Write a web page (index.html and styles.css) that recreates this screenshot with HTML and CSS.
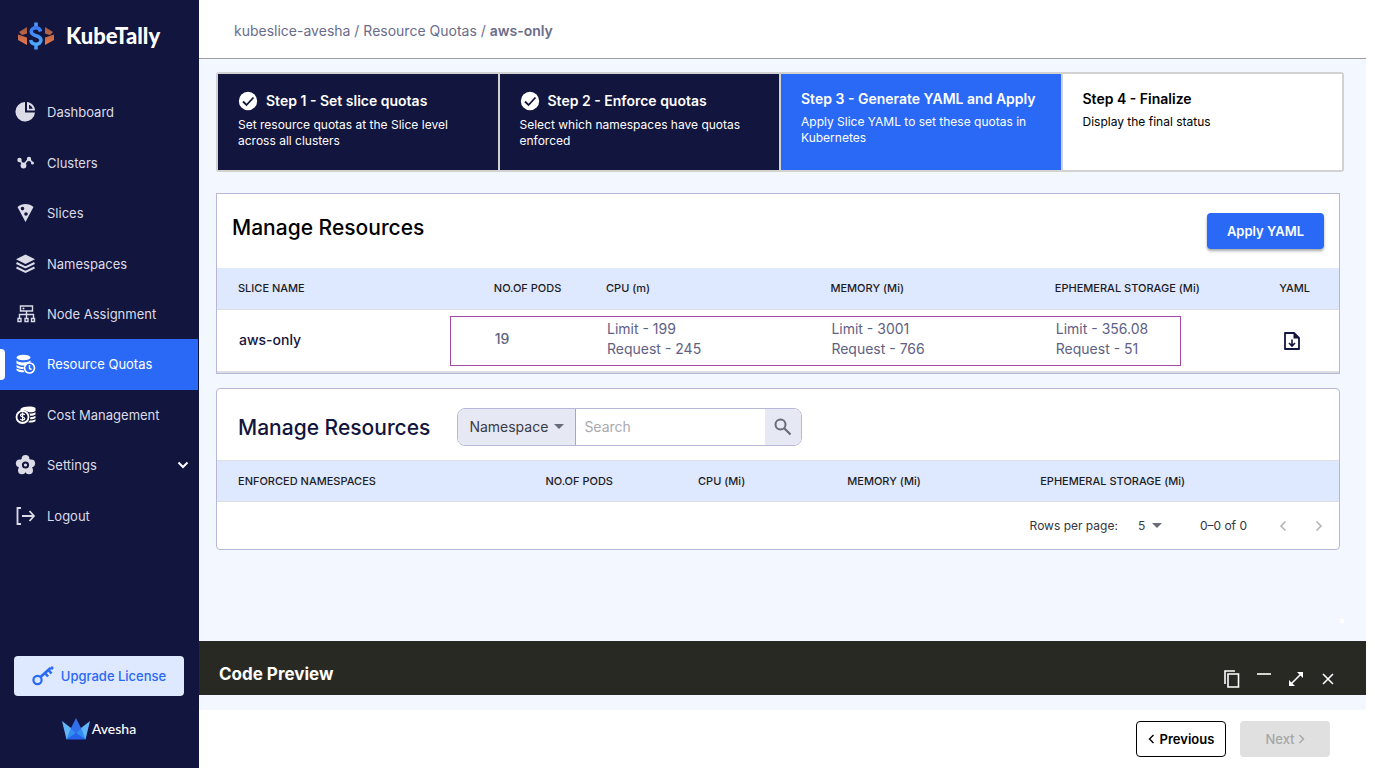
FILE: index.html
```html
<!DOCTYPE html>
<html lang="en">
<head>
<meta charset="utf-8">
<meta name="viewport" content="width=device-width, initial-scale=1">
<title>KubeTally - Resource Quotas</title>
<link rel="stylesheet" href="styles.css">
</head>
<body>
<div class="app">
  <aside class="sidebar">
    <div class="brand">
      <svg width="36" height="28" viewBox="0 0 36 28" aria-hidden="true">
        <defs>
          <linearGradient id="rust" x1="0" y1="0" x2="0" y2="1"><stop offset="0" stop-color="#a2583f"/><stop offset="1" stop-color="#e9794c"/></linearGradient>
          <linearGradient id="sky" x1="0" y1="0" x2="0" y2="1"><stop offset="0" stop-color="#3a7cf3"/><stop offset="1" stop-color="#4ea9fb"/></linearGradient>
        </defs>
        <path d="M9 5v6.500L4 13 1 10zM0 12.500l9 3V23l-9-5z" fill="url(#rust)"/>
        <path d="M27 5v6.500l5 1.500 3-3zM36 12.500l-9 3V23l9-5z" fill="url(#rust)"/>
        <path d="M18 .5v4M18 23.500v4" stroke="#4a9af8" stroke-width="3.600"/>
        <path d="M22.600 9.500c-.6-2.600-2.300-3.800-4.700-3.800-2.700 0-4.700 1.500-4.700 3.900 0 5.300 9.800 3 9.800 8.400 0 2.500-2.200 4.200-5.100 4.200-2.700 0-4.700-1.400-5.200-4.200" fill="none" stroke="url(#sky)" stroke-width="3.500"/>
      </svg>
      <span class="brand-name">KubeTally</span>
    </div>
    <nav class="nav">
      <a class="nav-item" href="#">
        <svg class="nav-icon" viewBox="0 0 20 20"><path d="M9.500 0a9.800 9.800 0 1 0 10 10.500h-10z" fill="currentColor"/><path d="M11.500 0v8.500h8C19.500 4 16 .5 11.500 0zm2 2.800c1.800.7 3 2 3.700 3.900h-3.700z" fill="currentColor" fill-rule="evenodd"/></svg>
        <span>Dashboard</span></a>
      <a class="nav-item" href="#">
        <svg class="nav-icon" viewBox="0 0 20 20"><path d="M4 7l4 5 5.500-6.500L17 10" fill="none" stroke="currentColor" stroke-width="1.500"/><circle cx="4" cy="7" r="2.200" fill="currentColor"/><circle cx="8" cy="12.500" r="2.900" fill="currentColor"/><circle cx="13.500" cy="6" r="2.200" fill="currentColor"/><circle cx="17" cy="10" r="1.500" fill="currentColor"/></svg>
        <span>Clusters</span></a>
      <a class="nav-item" href="#">
        <svg class="nav-icon" viewBox="0 0 20 20"><path d="M2 4c4-4 12-4 16 0l-8 15zM7 3.800a1.800 1.800 0 1 0 0 3.600 1.800 1.800 0 0 0 0-3.600zM10.500 9.200a1.800 1.800 0 1 0 0 3.600 1.800 1.800 0 0 0 0-3.600z" fill="currentColor" fill-rule="evenodd"/></svg>
        <span>Slices</span></a>
      <a class="nav-item" href="#">
        <svg class="nav-icon" viewBox="0 0 20 20"><path d="M10 .5l9.500 4.700L10 10 .5 5.200z" fill="currentColor"/><path d="M1 9l9 4.500L19 9M1 13.500l9 4.500 9-4.500" fill="none" stroke="currentColor" stroke-width="2"/></svg>
        <span>Namespaces</span></a>
      <a class="nav-item" href="#">
        <svg class="nav-icon" viewBox="0 0 20 20"><path d="M5 2h12v5H5zM11 7v7M4 14v-3.500h14V14M2.500 14.500h3v3h-3zM9.500 14.500h3v3h-3zM16 14.500h3v3h-3z" fill="none" stroke="currentColor" stroke-width="1.400"/><circle cx="8" cy="4.500" r="1" fill="currentColor"/></svg>
        <span>Node Assignment</span></a>
      <a class="nav-item active" href="#" aria-current="page">
        <svg class="nav-icon" viewBox="0 0 20 20"><ellipse cx="8" cy="3.500" rx="7" ry="2.800" fill="currentColor"/><path d="M1 6.500c2 2.500 11 2.500 14 0v2c-2 0-5 1-6 3-3 .3-6-.5-8-2zM1 11c2 1.500 4 2 7 2v2c-3 0-6-.5-7-2zM1 14.500c2 1.200 4 1.700 7 1.700l1 2c-4 .3-7-.7-8-2z" fill="currentColor"/><circle cx="14" cy="14" r="5" fill="#2969f5" stroke="currentColor" stroke-width="1.700"/><path d="M14 11v3.500l2 1" fill="none" stroke="currentColor" stroke-width="1.400"/></svg>
        <span>Resource Quotas</span></a>
      <a class="nav-item" href="#">
        <svg class="nav-icon cost" viewBox="0 0 20 20"><path d="M5 4c3-3 12-3 15-1v3c-2 1.500-5 1.500-7 1-2-1.500-5-2-8-1zM14 8.500c2 .2 4.500-.2 6-1.200v2.200c-1.500 1-3.500 1.300-5.500 1.200zM15 12c2 .1 3.700-.3 5-1.200V13c-1.500 1-3.500 1.300-5.400 1.200zM14.500 15.500c2 .1 4-.3 5.500-1.200v2c-2 1.300-5 1.500-7.500 1z" fill="currentColor"/><circle cx="7" cy="12" r="6" fill="none" stroke="currentColor" stroke-width="1.800"/><path d="M9.200 10C8.500 8.600 5 8.500 5 10.300s4.300 1.500 4.300 3.300-3.700 1.900-4.500.3M7.100 7.600v8.600" fill="none" stroke="currentColor" stroke-width="1.200"/></svg>
        <span>Cost Management</span></a>
      <a class="nav-item" href="#">
        <svg class="nav-icon" viewBox="0 0 20 20"><g fill="currentColor"><circle cx="10" cy="4" r="3.900"/><circle cx="15.700" cy="8.300" r="3.900"/><circle cx="13.600" cy="15.300" r="3.900"/><circle cx="6.400" cy="15.300" r="3.900"/><circle cx="4.300" cy="8.300" r="3.900"/><circle cx="10" cy="10" r="7.200"/></g><circle cx="10" cy="10" r="2.600" fill="currentColor" stroke="#12153d" stroke-width="2"/></svg>
        <span>Settings</span>
        <svg class="chevron" width="12" height="12" viewBox="0 0 12 12"><path d="M1.500 3.500L6 8l4.500-4.500" fill="none" stroke="#fff" stroke-width="2"/></svg></a>
      <a class="nav-item" href="#">
        <svg class="nav-icon" viewBox="0 0 20 20"><path d="M5.500 2H2v16h3.500M6.500 10H18M14 5l4.500 5-4.500 5" fill="none" stroke="currentColor" stroke-width="1.800"/></svg>
        <span>Logout</span></a>
    </nav>
    <div class="sidebar-foot">
      <button class="upgrade" type="button">
        <svg width="22" height="20" viewBox="0 0 22 20"><circle cx="5.500" cy="14" r="4.100" fill="none" stroke="currentColor" stroke-width="2.200"/><path d="M8.500 11L18.500 2M13 7l3 3.500M16.500 4l3 3.500M19 1l2 2" fill="none" stroke="currentColor" stroke-width="2.600"/></svg>
        Upgrade License
      </button>
      <div class="vendor">
        <svg width="28" height="22" viewBox="0 0 28 22" aria-hidden="true"><path d="M0 3l9 7 5 4-9.500 7.500z" fill="#62b5f8"/><path d="M28 3l-9 7-5 4 9.500 7.500z" fill="#62b5f8"/><path d="M14 0l5.500 11L14 16l-5.500-5z" fill="#2f6fec"/><path d="M8.500 11L14 16l-9.500 5.500zM19.500 11L14 16l9.500 5.500z" fill="#2f8df2"/><path d="M14 15l9.500 6.500h-19z" fill="#2563eb"/></svg>
        <span>Avesha</span>
      </div>
    </div>
  </aside>

  <main class="main">
    <header class="topbar">
      <nav class="crumbs" aria-label="Breadcrumb"><a href="#">kubeslice-avesha</a> / <a href="#">Resource Quotas</a> / <b>aws-only</b></nav>
    </header>
    <div class="content">
      <ol class="steps">
        <li class="step done"><h3><svg width="20" height="20" viewBox="0 0 20 20"><circle cx="10" cy="10" r="9.200" fill="#fff"/><path d="M5 10.500l3.500 3.500L15.500 6.500" fill="none" stroke="#12153d" stroke-width="1.800"/></svg>Step 1 - Set slice quotas</h3><p>Set resource quotas at the Slice level across all clusters</p></li>
        <li class="step done"><h3><svg width="20" height="20" viewBox="0 0 20 20"><circle cx="10" cy="10" r="9.200" fill="#fff"/><path d="M5 10.500l3.500 3.500L15.500 6.500" fill="none" stroke="#12153d" stroke-width="1.800"/></svg>Step 2 - Enforce quotas</h3><p>Select which namespaces have quotas enforced</p></li>
        <li class="step current" aria-current="step"><h3>Step 3 - Generate YAML and Apply</h3><p>Apply Slice YAML to set these quotas in Kubernetes</p></li>
        <li class="step"><h3>Step 4 - Finalize</h3><p>Display the final status</p></li>
      </ol>

      <section class="card">
        <div class="card-head">
          <h2>Manage Resources</h2>
          <button class="apply" type="button">Apply YAML</button>
        </div>
        <div class="slice-wrap">
          <table class="grid slices">
            <thead><tr><th class="w-name">SLICE NAME</th><th class="w-pods">NO.OF PODS</th><th class="w-res">CPU (m)</th><th class="w-res">MEMORY (Mi)</th><th class="w-res">EPHEMERAL STORAGE (Mi)</th><th>YAML</th></tr></thead>
            <tbody><tr>
              <td class="slice-name">aws-only</td>
              <td class="pods">19</td>
              <td>Limit - 199<br>Request - 245</td>
              <td>Limit - 3001<br>Request - 766</td>
              <td>Limit - 356.08<br>Request - 51</td>
              <td><button class="icon-btn" type="button" aria-label="Download YAML"><svg width="18" height="20" viewBox="0 0 18 20"><path d="M2 2h9l5 5v11H2z" fill="none" stroke="#12153d" stroke-width="1.800" stroke-linejoin="round"/><path d="M10.500 2v5.500H16z" fill="#12153d"/><path d="M9 8.500v6.500M6 12l3 3 3-3" fill="none" stroke="#12153d" stroke-width="1.600"/></svg></button></td>
            </tr></tbody>
          </table>
          <div class="highlight"></div>
        </div>
      </section>

      <section class="card rounded">
        <div class="filter-head">
          <h2>Manage Resources</h2>
          <div class="filter">
            <div class="picker">
              <select aria-label="Filter by"><option>Namespace</option></select>
              <svg width="10" height="5" viewBox="0 0 10 5"><path d="M0 0h10L5 5z" fill="#686b78"/></svg>
            </div>
            <input type="text" placeholder="Search" aria-label="Search">
            <button class="search-btn" type="button" aria-label="Search"><svg width="18" height="18" viewBox="0 0 18 18"><circle cx="6.500" cy="6.500" r="5" fill="none" stroke="#686b78" stroke-width="2"/><path d="M10.500 10.500l6 6" stroke="#686b78" stroke-width="2.200"/></svg></button>
          </div>
        </div>
        <table class="grid spaces">
          <thead><tr><th class="s-name">ENFORCED NAMESPACES</th><th class="s-pods">NO.OF PODS</th><th class="s-cpu">CPU (Mi)</th><th class="s-mem">MEMORY (Mi)</th><th>EPHEMERAL STORAGE (Mi)</th></tr></thead>
        </table>
        <div class="pager">
          <label for="rows">Rows per page:</label>
          <div class="picker rows"><select id="rows"><option>5</option></select>
            <svg width="10" height="5" viewBox="0 0 10 5"><path d="M0 0h10L5 5z" fill="#686b78"/></svg></div>
          <span class="range">0–0 of 0</span>
          <button class="icon-btn" type="button" aria-label="Previous page" disabled><svg width="12" height="12" viewBox="0 0 12 12"><path d="M8.500 1.500L4 6l4.500 4.500" fill="none" stroke="#b4b4b4" stroke-width="1.600"/></svg></button>
          <button class="icon-btn" type="button" aria-label="Next page" disabled><svg width="12" height="12" viewBox="0 0 12 12"><path d="M3.500 1.500L8 6l-4.500 4.500" fill="none" stroke="#b4b4b4" stroke-width="1.600"/></svg></button>
        </div>
      </section>
    </div>

    <section class="preview">
      <span class="handle"></span>
      <h2>Code Preview</h2>
      <div class="tools">
        <button class="icon-btn" type="button" aria-label="Copy"><svg width="16" height="18" viewBox="0 0 16 18"><path d="M1 14V1h10M4 4h10.500v13H4z" fill="none" stroke="#fff" stroke-width="1.600"/></svg></button>
        <button class="icon-btn" type="button" aria-label="Minimize"><svg width="16" height="18" viewBox="0 0 16 18"><path d="M1 4h14" stroke="#d4d4d0" stroke-width="2"/></svg></button>
        <button class="icon-btn" type="button" aria-label="Expand"><svg width="16" height="18" viewBox="0 0 16 18"><path d="M3 14L13 4" stroke="#fff" stroke-width="1.600"/><path d="M9 2h6v6zM1 10v6h6z" fill="#fff"/></svg></button>
        <button class="icon-btn" type="button" aria-label="Close"><svg width="16" height="18" viewBox="0 0 16 18"><path d="M3 4l10 10M13 4L3 14" stroke="#fff" stroke-width="1.600"/></svg></button>
      </div>
    </section>
    <footer class="actions">
      <button class="btn prev" type="button"><svg width="7" height="10" viewBox="0 0 7 10"><path d="M5.500 1L1.500 5l4 4" fill="none" stroke="currentColor" stroke-width="1.400"/></svg>Previous</button>
      <button class="btn next" type="button" disabled>Next<svg width="7" height="10" viewBox="0 0 7 10"><path d="M1.500 1l4 4-4 4" fill="none" stroke="currentColor" stroke-width="1.400"/></svg></button>
    </footer>
  </main>
</div>
</body>
</html>
```
FILE: styles.css
```css
* { box-sizing: border-box; }
body {
  margin: 0;
  padding: 0 9px 14px 0;
  background: #fff;
  color: #12153d;
  font: 13px/16px Inter, "Open Sans", sans-serif;
}
button, select, input { font: inherit; color: inherit; }
button { padding: 0; border: 0; background: none; }
svg { display: block; flex: none; }
h2, h3, p { margin: 0; }
a { color: inherit; text-decoration: none; }

.app { display: flex; min-height: calc(100vh - 14px); }

.sidebar {
  flex: none;
  display: flex;
  flex-direction: column;
  width: 199px;
  background: #12153d;
  color: #dcdce8;
}
.brand { display: flex; align-items: center; gap: 12px; height: 72px; padding-left: 18px; }
.brand-name { font: 900 22px/24px Lato, sans-serif; color: #fff; }
.nav { display: flex; flex-direction: column; height: 454px; margin-top: 15px; }
.nav-item { position: relative; flex: 1; display: flex; align-items: center; gap: 11px; margin-right: 1px; padding: 0 9px 0 15px; }
.nav-icon { width: 21px; height: 20px; }
.nav-icon.cost { color: #fff; }
.nav-item.active { background: #2969f5; color: #fff; }
.nav-item.active::before {
  content: "";
  position: absolute;
  left: 0;
  top: 10px;
  width: 5px;
  height: 31px;
  border-radius: 0 4px 4px 0;
  background: #fff;
}
.chevron { margin-left: auto; }
.sidebar-foot { margin-top: auto; padding: 0 15px 28px 14px; }
.upgrade {
  display: flex;
  align-items: center;
  justify-content: center;
  gap: 7px;
  width: 100%;
  height: 40px;
  border-radius: 4px;
  background: #dee8ff;
  color: #2969f5;
  font-weight: 500;
}
.vendor { display: flex; align-items: center; justify-content: center; gap: 2px; margin-top: 22px; font: 500 14px/22px Lato, sans-serif; color: #fff; }

.main { flex: 1; min-width: 0; display: flex; flex-direction: column; background: #f3f7ff; }
.topbar {
  display: flex;
  align-items: center;
  height: 59px;
  padding: 4px 35px 0;
  border-bottom: 1px solid #9c9ca4;
  background: #fff;
}
.crumbs { font-size: 14px; color: #6a6c8a; }
.crumbs b { font-weight: 600; }
.content { flex: 1; padding: 13px 26px 24px 17px; }

.steps {
  display: grid;
  grid-template-columns: repeat(4, 1fr);
  gap: 2px;
  height: 100px;
  margin: 0 -4px 21px 0;
  padding: 2px;
  border-radius: 3px;
  background: #d2d2d2;
  list-style: none;
}
.step { padding: 16px 14px 0 20px; background: #fff; color: #000; }
.step h3 { display: flex; align-items: center; gap: 8px; margin-bottom: 6px; font-size: 14px; line-height: 18px; font-weight: 600; }
.step p { font-size: 12px; }
.step.done { padding-top: 17px; background: #12153d; color: #fff; }
.step.done h3 { height: 20px; }
.step.current { background: #2969f5; color: #fff; }

.card { margin-bottom: 14px; border: 1px solid #b7b7d8; background: #fff; }
.card.rounded { border-radius: 4px; overflow: hidden; }
.card-head { display: flex; justify-content: space-between; align-items: flex-start; height: 74px; padding: 19px 15px 0; }
h2 { font-size: 21px; line-height: 30px; font-weight: 500; }
.card-head h2 { color: #000; }
.apply {
  width: 117px;
  height: 36px;
  border-radius: 4px;
  background: #2969f5;
  box-shadow: 0 2px 3px rgba(0, 0, 0, .35);
  color: #fff;
  font-weight: 600;
}
.grid { width: 100%; table-layout: fixed; border-collapse: separate; border-spacing: 0; text-align: left; }
.grid th {
  height: 42px;
  padding: 0 0 1px 21px;
  border-bottom: 1px solid #dddde2;
  background: #dee8ff;
  color: #1c1c24;
  font-size: 11px;
  font-weight: 500;
  white-space: nowrap;
}
.grid td { height: 63px; padding: 0 0 3px 22px; border-bottom: 2px solid #dedee2; color: #5f6184; font-size: 14px; line-height: 20px; }
.w-name { width: 22.8%; }
.w-pods { width: 10%; }
.w-res { width: 20%; }
.grid .slice-name { padding-bottom: 1px; color: #12153d; font-weight: 500; }
.grid .pods { font-weight: 500; }
.grid td .icon-btn { display: block; margin: 3px 0 0 3px; }
.slice-wrap { position: relative; }
.highlight { position: absolute; left: 233px; right: 158px; top: 48px; height: 50px; border: 1px solid #a349a4; pointer-events: none; }

.filter-head { display: flex; align-items: center; gap: 27px; height: 71px; padding: 6px 21px 0; }
.filter { display: flex; width: 345px; height: 38px; margin-bottom: 2px; border: 1px solid #b7b7d8; border-radius: 8px; overflow: hidden; }
.picker { position: relative; display: flex; align-items: center; width: 118px; border-right: 1px solid #a8a8bc; background: #e6e8f4; }
.picker select { appearance: none; width: 100%; height: 100%; padding: 0 24px 0 11px; border: 0; background: none; color: #3a3b48; font-size: 14px; }
.picker svg { position: absolute; right: 11px; pointer-events: none; }
.filter input { flex: 1; min-width: 0; padding: 0 8px; border: 0; outline: 0; font-size: 14px; }
.filter input::placeholder { color: #a9a9ae; }
.search-btn { display: flex; align-items: center; justify-content: center; width: 36px; background: #e6e8f4; }
.spaces th { border-top: 1px solid #dddde2; }
.s-name { width: 27.4%; }
.s-pods { width: 13.6%; }
.s-cpu { width: 13.3%; }
.s-mem { width: 17.2%; }
.pager { display: flex; align-items: center; justify-content: flex-end; height: 47px; padding-right: 14px; color: #34353f; font-size: 12px; }
.picker.rows { width: 34px; height: 24px; margin: 0 38px 0 10px; border: 0; background: none; }
.picker.rows select { padding: 0 0 0 10px; font-size: 12px; }
.picker.rows svg { right: 0; }
.range { margin-right: 30px; }
.pager .icon-btn + .icon-btn { margin-left: 24px; }

.preview {
  position: relative;
  display: flex;
  align-items: center;
  justify-content: space-between;
  height: 54px;
  margin-bottom: 15px;
  padding: 12px 30px 0 20px;
  background: #282923;
  color: #fff;
}
.preview h2 { font-size: 17px; line-height: 24px; font-weight: 700; }
.handle { position: absolute; right: 22px; top: -22px; width: 4px; height: 4px; background: #fff; }
.tools { display: flex; gap: 16px; padding-top: 10px; }
.actions { display: flex; justify-content: flex-end; gap: 14px; height: 58px; padding: 11px 36px 0; background: #fff; }
.btn { display: flex; align-items: center; justify-content: center; gap: 5px; width: 90px; height: 36px; border-radius: 4px; color: #000; font-weight: 600; }
.btn.prev { border: 1px solid #000; }
.btn.next { background: #e0e0e0; color: #a6a6a6; font-weight: 500; gap: 3px; }
```
